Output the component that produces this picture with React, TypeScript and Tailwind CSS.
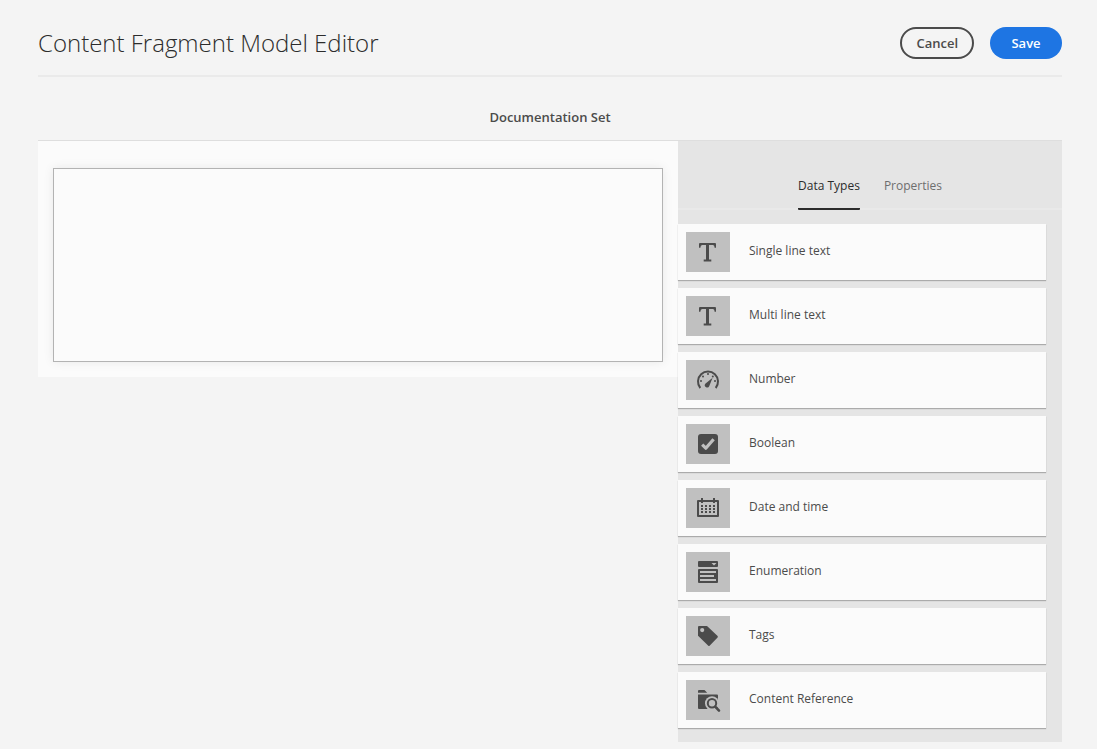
import { useState, type ReactNode } from "react";

const INK = "#4b4b4b";
const TILE = "#c0c0c0";

const TextIcon = () => (
  <path
    fill={INK}
    d="M14 11H29a1 1 0 0 1 1 1V15.800H28.600Q28.600 13 27 13H23V27.500H25.300V29.500H17.700V27.500H20V13H16.200Q14.400 13 14.400 15.800H13V12a1 1 0 0 1 1-1z"
  />
);

const NumberIcon = () => (
  <g fill={INK}>
    <path d="M14.300 28A10 10 0 1 1 29.700 28" fill="none" stroke={INK} strokeWidth="2" />
    <circle cx="15" cy="21" r="1" />
    <circle cx="17" cy="16.500" r="1" />
    <circle cx="22" cy="14" r="1" />
    <circle cx="29" cy="21" r="1" />
    <circle cx="26.800" cy="16.500" r="1" />
    <path d="M26.600 17.800 23.300 26a2.300 2.300 0 1 1-4-2.200z" />
  </g>
);

const BooleanIcon = () => (
  <>
    <rect x="12" y="10" width="20" height="20" rx="3" fill={INK} />
    <path d="M16.200 20.600 19.800 24.200 27.600 15.200" fill="none" stroke={TILE} strokeWidth="3.200" strokeLinejoin="round" />
  </>
);

const DateIcon = () => (
  <g fill={INK}>
    <path fillRule="evenodd" d="M12 12h20a1 1 0 0 1 1 1v15a1 1 0 0 1-1 1H12a1 1 0 0 1-1-1V13a1 1 0 0 1 1-1zM13 14v13h18V14z" />
    <path d="M15 10h2v5h-2zM27 10h2v5h-2z" />
    {[17, 20, 23].map((y) =>
      [15, 19, 23, 27].map((x) => <rect key={`${x}-${y}`} x={x} y={y} width="2" height="2" />),
    )}
  </g>
);

const EnumerationIcon = () => (
  <g fill={INK}>
    <rect x="12" y="9" width="20" height="6" rx="1" />
    <rect x="12" y="17" width="20" height="14" rx="1" />
    <path fill={TILE} d="M25.500 11h5L28 13.500zM14 19h16v2H14zM14 23h14v2H14zM14 27h16v2H14z" />
  </g>
);

const TagIcon = () => (
  <path
    fill={INK}
    fillRule="evenodd"
    d="M13 10h7.600a1 1 0 0 1 .7.300l10.300 9.800a1 1 0 0 1 0 1.300l-8 8.300a1 1 0 0 1-1.300 0l-10-9.600a1 1 0 0 1-.3-.7V11a1 1 0 0 1 1-1zM16.200 12a2.100 2.100 0 1 0 0 4.200 2.100 2.100 0 0 0 0-4.200z"
  />
);

const ReferenceIcon = () => (
  <g fill={INK}>
    <path d="M13 10h5.500l2.700 2.800H12V11a1 1 0 0 1 1-1zM12 14.500h19a1 1 0 0 1 1 1V29H13a1 1 0 0 1-1-1z" />
    <circle cx="26" cy="23.300" r="7" fill={TILE} />
    <path d="M27 29h6v-6h2v10h-5z" fill={TILE} />
    <circle cx="26" cy="23.300" r="4.200" fill="none" stroke={INK} strokeWidth="2" />
    <path d="M29.200 26.600 33 30.600" stroke={INK} strokeWidth="2.600" strokeLinecap="round" />
  </g>
);

const dataTypes: { label: string; icon: ReactNode }[] = [
  { label: "Single line text", icon: <TextIcon /> },
  { label: "Multi line text", icon: <TextIcon /> },
  { label: "Number", icon: <NumberIcon /> },
  { label: "Boolean", icon: <BooleanIcon /> },
  { label: "Date and time", icon: <DateIcon /> },
  { label: "Enumeration", icon: <EnumerationIcon /> },
  { label: "Tags", icon: <TagIcon /> },
  { label: "Content Reference", icon: <ReferenceIcon /> },
];

const tabs = ["Data Types", "Properties"];

export default function App() {
  const [active, setActive] = useState(tabs[0]);

  return (
    <div className="min-h-screen bg-[#f4f4f4] pt-[27px] pr-[35px] pb-[7px] pl-[38px] font-['Open_Sans','Noto_Sans',sans-serif] text-[#4b4b4b]">
      <header className="flex items-center justify-between border-b-2 border-[#eaeaea] pb-4">
        <h1 className="text-2xl leading-8 font-light text-[#2c2c2c]">Content Fragment Model Editor</h1>
        <div className="flex gap-4">
          <button type="button" className="h-8 min-w-[72px] rounded-full border-2 border-[#4b4b4b] px-3.5 text-[13px] leading-4 font-semibold">
            Cancel
          </button>
          <button type="button" className="h-8 min-w-[72px] rounded-full bg-[#1e75e3] px-3.5 text-[13px] leading-4 font-semibold text-white">
            Save
          </button>
        </div>
      </header>

      <h2 className="pt-7 pb-[11px] text-center text-[13px] leading-6 font-semibold">Documentation Set</h2>

      <main className="flex items-start border-t border-[#dedede]">
        <section aria-label="Model fields" className="w-5/8 bg-[#fbfbfb] px-[15px] pt-[27px] pb-[15px]">
          <div className="h-[194px] border border-[#b3b3b3] shadow-[0_0_10px_rgba(0,0,0,0.08)]" />
        </section>

        <aside className="w-3/8 bg-[#e5e5e5] pt-7 pb-3.5">
          <div role="tablist" className="flex justify-center gap-6 border-b-2 border-[#e9e9e9]">
            {tabs.map((tab) => (
              <button
                key={tab}
                type="button"
                role="tab"
                aria-selected={tab === active}
                onClick={() => setActive(tab)}
                className={
                  tab === active
                    ? "-mb-0.5 rounded-b-[1px] border-b-2 border-[#2c2c2c] pt-[5px] pb-2.5 text-xs leading-6 font-medium text-[#2c2c2c]"
                    : "-mb-0.5 border-b-2 border-transparent pt-[5px] pb-2.5 text-xs leading-6 text-[#6e6e6e]"
                }
              >
                {tab}
              </button>
            ))}
          </div>
          <ul className="mt-3.5 mr-4 flex flex-col gap-2">
            {dataTypes.map(({ label, icon }) => (
              <li key={label} className="flex h-14 items-center bg-[#fbfbfb] pl-2 shadow-[0_1px_1px_rgba(0,0,0,0.25)]">
                <svg viewBox="0 0 44 40" className="h-10 w-11 bg-[#c0c0c0]" aria-hidden="true">
                  {icon}
                </svg>
                <span className="pb-0.5 pl-[19px] text-xs leading-5 font-medium">{label}</span>
              </li>
            ))}
          </ul>
        </aside>
      </main>
    </div>
  );
}
